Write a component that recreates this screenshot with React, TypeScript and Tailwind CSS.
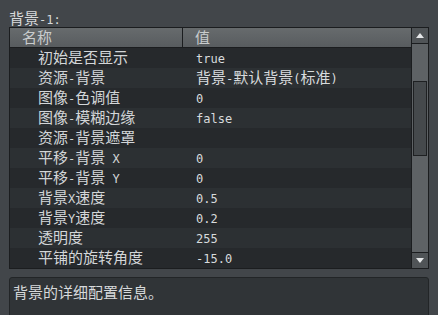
import React from 'react';

const CJK = /([\u2e80-\u9fff\u3000-\u303f\uff00-\uffef]+)/;

// Latin runs render in mono, CJK runs in the larger fallback size
const Mixed = ({ text }: { text: string }) => (
  <>
    {text.split(CJK).map((part, i) =>
      CJK.test(part) ? (
        <span key={i} className="text-[15px]">{part}</span>
      ) : (
        <span key={i} className="text-[12px]">{part}</span>
      )
    )}
  </>
);

const rows: [string, string][] = [
  ['初始是否显示', 'true'],
  ['资源-背景', '背景-默认背景(标准)'],
  ['图像-色调值', '0'],
  ['图像-模糊边缘', 'false'],
  ['资源-背景遮罩', ''],
  ['平移-背景 X', '0'],
  ['平移-背景 Y', '0'],
  ['背景X速度', '0.5'],
  ['背景Y速度', '0.2'],
  ['透明度', '255'],
  ['平铺的旋转角度', '-15.0'],
];

const App = () => {
  return (
    <div className="w-[438px] h-[315px] overflow-hidden bg-[#42464a] font-['DejaVu_Sans_Mono','Noto_Sans_CJK_SC',monospace] text-[#d3d6d8]">
      <div className="pt-[10px] h-[27px] pl-[9px] leading-[17px] text-[#d8dadb]">
        <Mixed text="背景-1:" />
      </div>

      <div className="ml-[9px] w-[420px] border border-[#1b1d1f] flex">
        <div className="flex-1 flex flex-col">
          <div className="h-[20px] flex border-b border-[#1b1d1f] bg-linear-to-b from-[#676b6d] to-[#585c5f] text-[#c9cccd] leading-[19px]">
            <div className="w-[173px] pl-[12px] border-r border-[#1b1d1f]">
              <Mixed text="名称" />
            </div>
            <div className="flex-1 pl-[12px]">
              <Mixed text="值" />
            </div>
          </div>
          {rows.map(([name, value], i) => (
            <div
              key={name}
              className={
                i % 2 === 0
                  ? 'h-[20px] flex items-center bg-[#26292c] leading-[20px]'
                  : 'h-[20px] flex items-center bg-[#2c3033] leading-[20px]'
              }
            >
              <div className="w-[174px] pl-[28px] whitespace-pre">
                <Mixed text={name} />
              </div>
              <div className="flex-1 pl-[12px] whitespace-pre text-[#d8dbdd]">
                <Mixed text={value} />
              </div>
            </div>
          ))}
        </div>

        <div className="w-[17px] border-l border-[#1b1d1f] flex flex-col">
          <div className="h-[15px] bg-[#505457] flex items-center justify-center">
            <svg width="8" height="5" viewBox="0 0 8 5">
              <path d="M4 0 L8 5 L0 5 Z" fill="#e6e8e9" />
            </svg>
          </div>
          <div className="flex-1 border-y border-[#1b1d1f] bg-[#5e6265] flex flex-col">
            <div className="mt-[37px] h-[75px] mx-[1px] border border-[#1e2022] bg-[#45494c]" />
          </div>
          <div className="h-[15px] bg-[#505457] flex items-center justify-center">
            <svg width="8" height="5" viewBox="0 0 8 5">
              <path d="M0 0 L8 0 L4 5 Z" fill="#e6e8e9" />
            </svg>
          </div>
        </div>
      </div>

      <div className="mt-[8px] ml-[9px] w-[420px] h-[60px] rounded-[3px] border border-[#222527] bg-[#303437] pl-[3px] pt-[5px] leading-[20px] text-[#d6d9db]">
        <Mixed text="背景的详细配置信息。" />
      </div>
    </div>
  );
};

export default App;
